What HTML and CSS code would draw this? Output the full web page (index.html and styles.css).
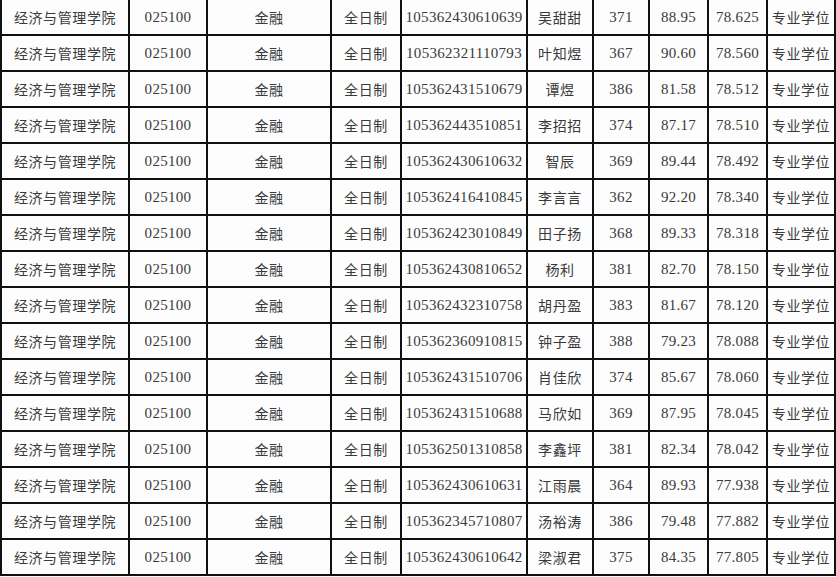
FILE: index.html
```html
<!DOCTYPE html>
<html lang="zh">
<head>
<meta charset="utf-8">
<link rel="stylesheet" href="styles.css">
</head>
<body>
<div class="sheet">
  <div class="row"><span>经济与管理学院</span><span class="num">025100</span><span>金融</span><span>全日制</span><span class="num">105362430610639</span><span>吴甜甜</span><span class="num">371</span><span class="num">88.95</span><span class="num">78.625</span><span>专业学位</span></div>
  <div class="row"><span>经济与管理学院</span><span class="num">025100</span><span>金融</span><span>全日制</span><span class="num">105362321110793</span><span>叶知煜</span><span class="num">367</span><span class="num">90.60</span><span class="num">78.560</span><span>专业学位</span></div>
  <div class="row"><span>经济与管理学院</span><span class="num">025100</span><span>金融</span><span>全日制</span><span class="num">105362431510679</span><span>谭煜</span><span class="num">386</span><span class="num">81.58</span><span class="num">78.512</span><span>专业学位</span></div>
  <div class="row"><span>经济与管理学院</span><span class="num">025100</span><span>金融</span><span>全日制</span><span class="num">105362443510851</span><span>李招招</span><span class="num">374</span><span class="num">87.17</span><span class="num">78.510</span><span>专业学位</span></div>
  <div class="row"><span>经济与管理学院</span><span class="num">025100</span><span>金融</span><span>全日制</span><span class="num">105362430610632</span><span>智辰</span><span class="num">369</span><span class="num">89.44</span><span class="num">78.492</span><span>专业学位</span></div>
  <div class="row"><span>经济与管理学院</span><span class="num">025100</span><span>金融</span><span>全日制</span><span class="num">105362416410845</span><span>李言言</span><span class="num">362</span><span class="num">92.20</span><span class="num">78.340</span><span>专业学位</span></div>
  <div class="row"><span>经济与管理学院</span><span class="num">025100</span><span>金融</span><span>全日制</span><span class="num">105362423010849</span><span>田子扬</span><span class="num">368</span><span class="num">89.33</span><span class="num">78.318</span><span>专业学位</span></div>
  <div class="row"><span>经济与管理学院</span><span class="num">025100</span><span>金融</span><span>全日制</span><span class="num">105362430810652</span><span>杨利</span><span class="num">381</span><span class="num">82.70</span><span class="num">78.150</span><span>专业学位</span></div>
  <div class="row"><span>经济与管理学院</span><span class="num">025100</span><span>金融</span><span>全日制</span><span class="num">105362432310758</span><span>胡丹盈</span><span class="num">383</span><span class="num">81.67</span><span class="num">78.120</span><span>专业学位</span></div>
  <div class="row"><span>经济与管理学院</span><span class="num">025100</span><span>金融</span><span>全日制</span><span class="num">105362360910815</span><span>钟子盈</span><span class="num">388</span><span class="num">79.23</span><span class="num">78.088</span><span>专业学位</span></div>
  <div class="row"><span>经济与管理学院</span><span class="num">025100</span><span>金融</span><span>全日制</span><span class="num">105362431510706</span><span>肖佳欣</span><span class="num">374</span><span class="num">85.67</span><span class="num">78.060</span><span>专业学位</span></div>
  <div class="row"><span>经济与管理学院</span><span class="num">025100</span><span>金融</span><span>全日制</span><span class="num">105362431510688</span><span>马欣如</span><span class="num">369</span><span class="num">87.95</span><span class="num">78.045</span><span>专业学位</span></div>
  <div class="row"><span>经济与管理学院</span><span class="num">025100</span><span>金融</span><span>全日制</span><span class="num">105362501310858</span><span>李鑫坪</span><span class="num">381</span><span class="num">82.34</span><span class="num">78.042</span><span>专业学位</span></div>
  <div class="row"><span>经济与管理学院</span><span class="num">025100</span><span>金融</span><span>全日制</span><span class="num">105362430610631</span><span>江雨晨</span><span class="num">364</span><span class="num">89.93</span><span class="num">77.938</span><span>专业学位</span></div>
  <div class="row"><span>经济与管理学院</span><span class="num">025100</span><span>金融</span><span>全日制</span><span class="num">105362345710807</span><span>汤裕涛</span><span class="num">386</span><span class="num">79.48</span><span class="num">77.882</span><span>专业学位</span></div>
  <div class="row"><span>经济与管理学院</span><span class="num">025100</span><span>金融</span><span>全日制</span><span class="num">105362430610642</span><span>梁淑君</span><span class="num">375</span><span class="num">84.35</span><span class="num">77.805</span><span>专业学位</span></div>
</div>
</body>
</html>
```

FILE: styles.css
```css
html, body {
  margin: 0;
  padding: 0;
  background: #ffffff;
}

.sheet {
  width: 836px;
  box-sizing: border-box;
  display: flex;
  flex-direction: column;
  gap: 2px;
  padding: 0 2px 2px 2px;
  background: #111111;
  font-family: "Liberation Serif", "Noto Sans CJK SC", serif;
  color: #3a3a3a;
}

.row {
  display: grid;
  grid-template-columns: 126px 76px 122px 68px 124px 64px 54px 57px 57px 66px;
  gap: 2px;
  height: 34px;
}

.row > span {
  background: #fdfdfd;
  display: flex;
  align-items: center;
  justify-content: center;
  white-space: nowrap;
  overflow: hidden;
  font-size: 14px;
  letter-spacing: 0.6px;
}

.row > .num {
  font-size: 15px;
  letter-spacing: 0.3px;
  padding-top: 1px;
}
```
